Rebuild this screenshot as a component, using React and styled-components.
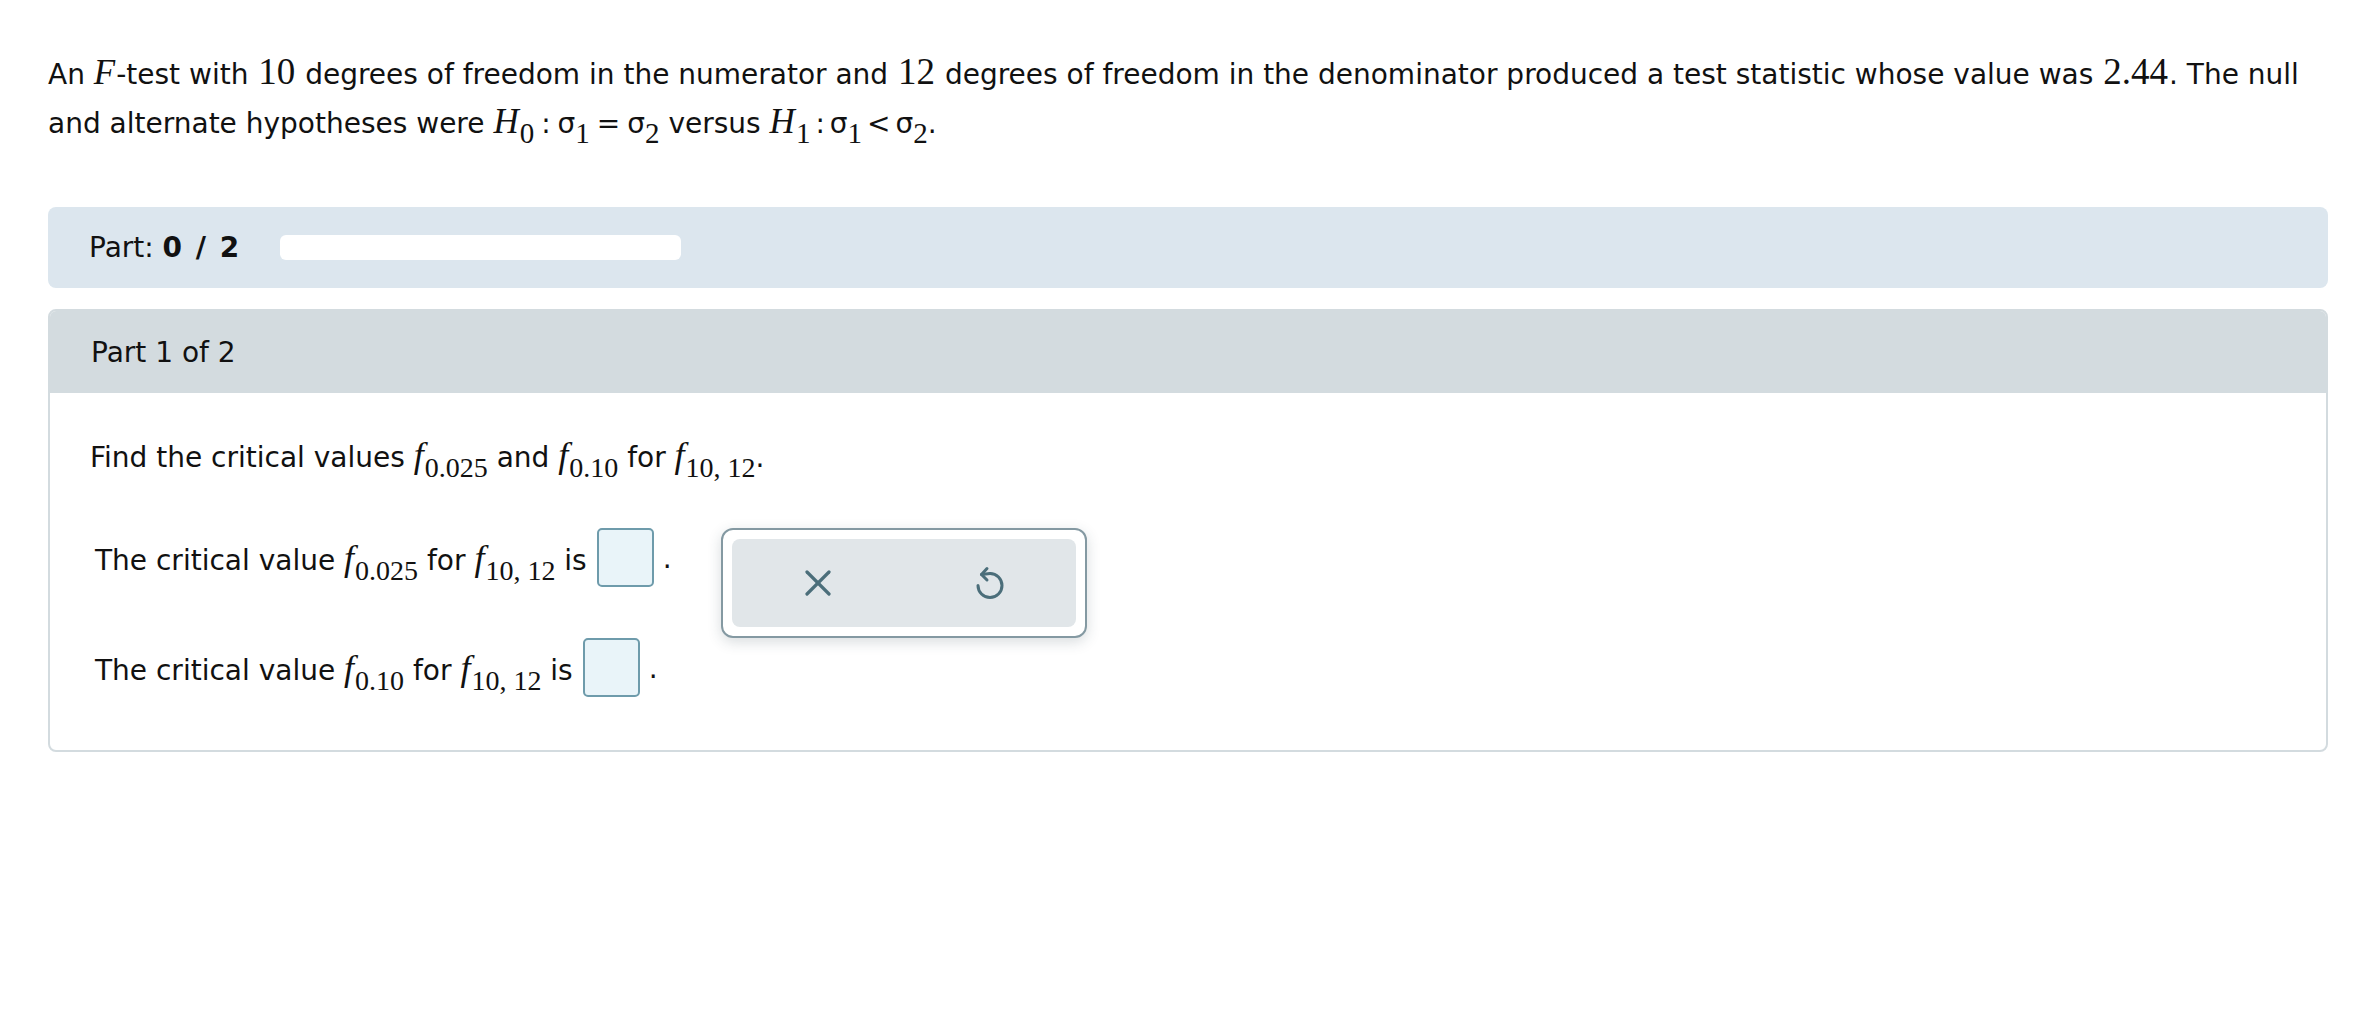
import * as React from 'react';
import styled, { createGlobalStyle } from 'styled-components';

const GlobalStyle = createGlobalStyle`
    body {
        margin: 0;
        background: #fff;
        font-family: "DejaVu Sans", Verdana, sans-serif;
        color: #111;
    }
`;

const Page = styled.div`
    padding: 48px 34px 0 48px;
`;

const Problem = styled.p`
    margin: 0;
    font-size: 28px;
    line-height: 47px;
`;

const Var = styled.i`
    font-family: "Liberation Serif", "Times New Roman", serif;
    font-style: italic;
    font-size: ${props => props.size || 35}px;
    padding-right: 1px;
`;

const Num = styled.span`
    font-family: "Liberation Serif", "Times New Roman", serif;
    font-size: 37px;
    margin: 0 1px;
`;

const Sub = styled.sub`
    font-family: "Liberation Serif", "Times New Roman", serif;
    font-size: ${props => props.size || 28}px;
    vertical-align: ${props => props.drop || -9}px;
    line-height: 0;
`;

const Op = styled.span`
    margin: 0 ${props => props.space || 6}px;
`;

const PartBar = styled.div`
    margin-top: 60px;
    height: 81px;
    background: #dce6ee;
    border-radius: 8px;
    display: flex;
    align-items: center;
    padding-left: 41px;
    gap: 39px;
    font-size: 28px;

    b {
        letter-spacing: 2px;
    }
`;

const Progress = styled.div`
    width: 401px;
    height: 25px;
    background: #fff;
    border-radius: 6px;
`;

const Card = styled.div`
    margin-top: 21px;
    border: 2px solid #d3dbdf;
    border-radius: 8px;
    overflow: hidden;
`;

const CardHeader = styled.div`
    height: 82px;
    background: #d3dbdf;
    display: flex;
    align-items: center;
    padding-left: 41px;
    font-size: 28px;
`;

const CardBody = styled.div`
    padding: 38px 40px 53px 40px;
    font-size: 28px;
`;

const Line = styled.div`
    line-height: 48px;
`;

const Rows = styled.div`
    margin-top: 46px;
    padding-left: 5px;
    display: flex;
    flex-direction: column;
    gap: 51px;
`;

const Row = styled.div`
    display: flex;
    align-items: center;
    height: 59px;
`;

const AnswerSlot = styled.span`
    position: relative;
    display: inline-flex;
    margin-left: 10px;
`;

const AnswerBox = styled.span`
    display: inline-block;
    width: 53px;
    height: 55px;
    border: 2px solid #6e9bab;
    border-radius: 5px;
    background: #e9f4f9;
`;

const Dot = styled.span`
    margin-left: 9px;
    align-self: flex-end;
    padding-bottom: 12px;
`;

const Popover = styled.div`
    position: absolute;
    left: 124px;
    top: 0;
    width: 366px;
    height: 110px;
    box-sizing: border-box;
    border: 2px solid #8499a2;
    border-radius: 12px;
    background: #fff;
    box-shadow: 0 4px 14px rgba(40, 60, 70, 0.18);
    padding: 9px;
    z-index: 2;
`;

const ToolPad = styled.div`
    height: 100%;
    background: #e1e6e9;
    border-radius: 8px;
    display: grid;
    grid-template-columns: 1fr 1fr;
    align-items: center;
    justify-items: center;
`;

const ToolButton = styled.button`
    border: none;
    background: transparent;
    padding: 0;
    display: flex;
    align-items: center;
    justify-content: center;
    color: #4b6e7a;
    cursor: pointer;
`;

const ClearIcon = () => (
    <svg width="26" height="26" viewBox="0 0 26 26" fill="none" stroke="currentColor" strokeWidth="3.2" strokeLinecap="round">
        <path d="M2 2 L24 24" />
        <path d="M24 2 L2 24" />
    </svg>
);

const UndoIcon = () => (
    <svg width="30" height="34" viewBox="0 0 30 34" fill="none" stroke="currentColor" strokeWidth="3" strokeLinecap="round" strokeLinejoin="round">
        <path d="M15 7.5 A12 12 0 1 1 3 19.5" />
        <path d="M15 7.5 L6.5 8.5" />
        <path d="M12 2.5 L6.5 8.5 L12 14" />
    </svg>
);

const Sigma = ({ i }) => (
    <span>σ<Sub size={29} drop={-10}>{i}</Sub></span>
);

const F = ({ sub }) => (
    <span><Var size={36}>f</Var><Sub size={28} drop={-10}>{sub}</Sub></span>
);

export default function App() {
    return (
        <Page>
            <GlobalStyle />
            <Problem>
                An <Var>F</Var>-test with <Num>10</Num> degrees of freedom in the numerator and <Num>12</Num> degrees
                of freedom in the denominator produced a test statistic whose value was <Num>2.44</Num>. The null and
                alternate hypotheses were <Var>H</Var><Sub size={29} drop={-10}>0</Sub><Op space={7}>:</Op><Sigma i="1" /><Op space={7}>=</Op><Sigma i="2" /> versus{' '}
                <Var>H</Var><Sub size={29} drop={-10}>1</Sub><Op space={5}>:</Op><Sigma i="1" /><Op space={5}>&lt;</Op><Sigma i="2" />.
            </Problem>

            <PartBar>
                <span>Part: <b>0 / 2</b></span>
                <Progress />
            </PartBar>

            <Card>
                <CardHeader>Part 1 of 2</CardHeader>
                <CardBody>
                    <Line>
                        Find the critical values <F sub="0.025" /> and <F sub="0.10" /> for <F sub="10, 12" />.
                    </Line>
                    <Rows>
                        <Row>
                            <span>The critical value <F sub="0.025" /> for <F sub="10, 12" /> is</span>
                            <AnswerSlot>
                                <AnswerBox />
                                <Popover>
                                    <ToolPad>
                                        <ToolButton aria-label="clear"><ClearIcon /></ToolButton>
                                        <ToolButton aria-label="undo"><UndoIcon /></ToolButton>
                                    </ToolPad>
                                </Popover>
                            </AnswerSlot>
                            <Dot>.</Dot>
                        </Row>
                        <Row>
                            <span>The critical value <F sub="0.10" /> for <F sub="10, 12" /> is</span>
                            <AnswerSlot>
                                <AnswerBox />
                            </AnswerSlot>
                            <Dot>.</Dot>
                        </Row>
                    </Rows>
                </CardBody>
            </Card>
        </Page>
    );
}
